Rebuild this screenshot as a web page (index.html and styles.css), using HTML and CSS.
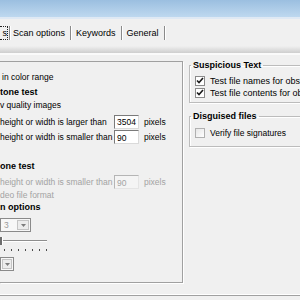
FILE: index.html
```html
<!DOCTYPE html>
<html>
<head>
<meta charset="utf-8">
<link rel="stylesheet" href="styles.css">
</head>
<body>
<div class="titlebar"></div>
<div class="tabstrip">
  <span class="focus">s</span><span class="sep"></span>
  <span class="tab first">Scan options</span><span class="sep"></span>
  <span class="tab">Keywords</span><span class="sep"></span>
  <span class="tab">General</span><span class="sep"></span>
</div>
<div class="tabband"></div>
<div class="page">
  <div class="left">
    <div class="line ind">in color range</div>
    <div class="line head mt2">tone test</div>
    <div class="line">v quality images</div>
    <div class="field mt3"><span class="lbl">height or width is larger than</span><span class="num">3504</span><span class="unit">pixels</span></div>
    <div class="field mt1"><span class="lbl">height or width is smaller than</span><span class="num low">90</span><span class="unit">pixels</span></div>
    <div class="line head mt16">one test</div>
    <div class="field dis mt2"><span class="lbl">height or width is smaller than</span><span class="num low">90</span><span class="unit">pixels</span></div>
    <div class="line short dis">deo file format</div>
    <div class="line short head">n options</div>
    <div class="combo mt5"><span class="val">3</span><span class="btn"><svg width="5" height="3" viewBox="0 0 5 3"><path d="M0 0h5L2.5 3z" fill="#7c7c7c"/></svg></span></div>
    <div class="slider">
      <div class="trackrow"><span class="thumb"></span><span class="track"></span></div>
      <div class="ticks"><i></i><i></i><i></i><i></i><i></i><i></i><i></i></div>
    </div>
    <div class="combo small"><span class="btn"><svg width="5" height="3" viewBox="0 0 5 3"><path d="M0 0h5L2.5 3z" fill="#7c7c7c"/></svg></span></div>
  </div>
  <div class="right">
    <fieldset class="group g1">
      <legend>Suspicious Text</legend>
      <div class="chk"><span class="cb"><svg width="8" height="8" viewBox="0 0 8 8"><path d="M1 3.5l2 2 4-4.5" fill="none" stroke="#1a1a1a" stroke-width="1.6"/></svg></span>Test file names for obscene words</div>
      <div class="chk"><span class="cb"><svg width="8" height="8" viewBox="0 0 8 8"><path d="M1 3.5l2 2 4-4.5" fill="none" stroke="#1a1a1a" stroke-width="1.6"/></svg></span>Test file contents for obscene words</div>
    </fieldset>
    <fieldset class="group g2">
      <legend>Disguised files</legend>
      <div class="chk"><span class="cb off"></span>Verify file signatures</div>
    </fieldset>
  </div>
</div>
<div class="bottomline"></div>
</body>
</html>
```

FILE: styles.css
```css
html, body {
  margin: 0;
  padding: 0;
}
body {
  width: 300px;
  height: 300px;
  overflow: hidden;
  background: #f0f0f0;
  font-family: "Liberation Sans", Arial, sans-serif;
  font-size: 8.5px;
  color: #000;
}
.titlebar {
  height: 17px;
  background: linear-gradient(#9bbfe0, #bed8ef);
  border-bottom: 2px solid #dfe9f4;
}
.tabstrip {
  height: 27px;
  display: flex;
  align-items: center;
  font-size: 9px;
  white-space: nowrap;
}
.focus {
  box-sizing: border-box;
  width: 8px;
  height: 14px;
  border: 1px dotted #222;
  border-left: none;
  overflow: hidden;
  direction: rtl;
  line-height: 12px;
  color: #000;
}
.sep {
  width: 1px;
  height: 14px;
  margin-left: 1px;
  background: #8a8a8a;
  box-shadow: 1px 0 0 #fff;
}
.tab {
  padding: 0 4px 0 5px;
  line-height: 14px;
}
.tab.first {
  padding-left: 3px;
}
.tabband {
  height: 7px;
  background: linear-gradient(#f0f0f0, #cecece);
  border-bottom: 2px solid #fafafa;
}
.page {
  display: flex;
  align-items: flex-start;
  height: 228px;
}
.left {
  flex-shrink: 0;
  box-sizing: border-box;
  margin-top: 6px;
  width: 183px;
  height: 222px;
  padding-top: 9px;
  border: 1px solid #a0a0a0;
  border-left: none;
  box-shadow: 1px 1px 0 #fff;
  display: flex;
  flex-direction: column;
  align-items: flex-start;
}
.line {
  height: 13px;
  line-height: 13px;
  white-space: nowrap;
}
.line.ind {
  padding-left: 2px;
}
.line.short {
  height: 12px;
  line-height: 12px;
}
.head {
  font-weight: bold;
  font-size: 9px;
}
.mt1 { margin-top: 1px; }
.mt2 { margin-top: 2px; }
.mt3 { margin-top: 3px; }
.mt5 { margin-top: 5px; }
.mt16 { margin-top: 16px; }
.dis {
  color: #a3a3a3;
}
.field {
  display: flex;
  align-items: center;
  height: 14px;
  white-space: nowrap;
}
.lbl {
  width: 114px;
}
.num {
  box-sizing: border-box;
  width: 25px;
  height: 14px;
  padding: 0 0 0 2px;
  line-height: 13px;
  background: #fff;
  border: 1px solid;
  border-color: #7a7a7a #dadada #dadada #7a7a7a;
  color: #000;
}
.num.low {
  line-height: 15px;
}
.dis .num {
  background: #f4f4f4;
  border-color: #b5b5b5 #e4e4e4 #e4e4e4 #b5b5b5;
  color: #a3a3a3;
}
.unit {
  margin-left: 5px;
}
.combo {
  box-sizing: border-box;
  display: flex;
  align-items: stretch;
  width: 31px;
  height: 14px;
  border: 1px solid #8a8a8a;
  background: #f7f7f7;
  padding: 1px;
}
.combo .val {
  flex: 1;
  padding-left: 2px;
  line-height: 11px;
  color: #9a9a9a;
}
.combo .btn {
  box-sizing: border-box;
  width: 12px;
  border: 1px solid #c4c4c4;
  background: #ececec;
  display: flex;
  align-items: center;
  justify-content: center;
}
.combo.small {
  width: 14px;
  margin-top: 4px;
}
.combo.small .btn {
  margin-left: auto;
}
.slider {
  height: 20px;
  margin-top: 1px;
  width: 47px;
}
.trackrow {
  display: flex;
  align-items: center;
  height: 9px;
  margin-top: 3px;
}
.thumb {
  width: 2px;
  height: 8px;
  background: #6d6d6d;
  border-right: 1px solid #fff;
}
.track {
  flex: 1;
  height: 1px;
  background: #8e8e8e;
  border-bottom: 1px solid #fff;
}
.ticks {
  display: flex;
  gap: 6px;
  padding-left: 4px;
  margin-top: 4px;
}
.ticks i {
  width: 1px;
  height: 2px;
  background: #4a4a4a;
}
.right {
  flex-shrink: 0;
  margin-left: 6px;
  padding-top: 5px;
  display: flex;
  flex-direction: column;
  align-items: flex-start;
}
.group {
  box-sizing: border-box;
  width: 160px;
  margin: 0;
  padding: 4px 0 3px 5px;
  border: 1px solid #bcbcbc;
  box-shadow: inset 1px 1px 0 #fff, 1px 1px 0 #fff;
}
.group legend {
  padding: 0 2px;
  margin-left: -4px;
  font-weight: bold;
  font-size: 9px;
  line-height: 11px;
}
.g2 {
  margin-top: 8px;
  padding-top: 5px;
  padding-bottom: 7px;
}
.chk {
  display: flex;
  align-items: center;
  height: 12px;
  white-space: nowrap;
  font-size: 9px;
}
.g2 .chk {
  font-size: 8.5px;
}
.cb {
  box-sizing: border-box;
  width: 10px;
  height: 10px;
  margin-right: 5px;
  border: 1px solid #8a8a8a;
  background: #fff;
  display: flex;
  align-items: center;
  justify-content: center;
}
.cb.off {
  border-color: #b0b0b0;
  background: linear-gradient(135deg, #e6e6e6, #fff);
}
.bottomline {
  margin-top: 11px;
  height: 1px;
  background: #fff;
  border-bottom: 1px solid #a0a0a0;
}
```
